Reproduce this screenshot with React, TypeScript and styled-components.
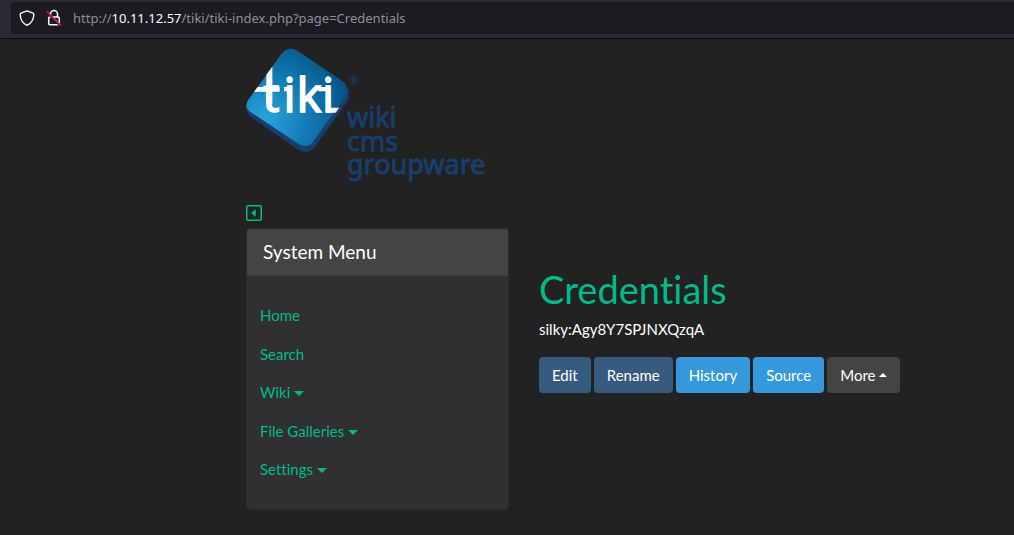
import React from "react";
import styled, { createGlobalStyle } from "styled-components";

const GlobalStyle = createGlobalStyle`
  *, *::before, *::after { box-sizing: border-box; }
  body {
    margin: 0;
    background: #222;
    color: #fff;
    font-family: Lato, "Liberation Sans", sans-serif;
    font-size: 15px;
    line-height: 1.5;
    font-variant-ligatures: none;
  }
`;

const Toolbar = styled.header`
  display: flex;
  height: 39px;
  padding: 2px 0 4px 11px;
  background: #2b2a33;
  border-bottom: 1px solid #0c0c0d;
`;

const AddressField = styled.div`
  display: flex;
  flex: 1;
  align-items: center;
  gap: 11px;
  height: 32px;
  padding: 0 8px;
  border-radius: 4px 0 0 4px;
  background: #1c1b22;
`;

const Address = styled.div`
  font-family: "Noto Sans", sans-serif;
  font-size: 13px;
  line-height: 20px;
  color: #8f8e94;
  white-space: nowrap;
`;

const Host = styled.span`
  color: #fbfbfe;
`;

const Page = styled.div`
  padding: 9px 24px 24px 246px;
`;

const LogoLink = styled.a`
  display: block;
  width: 242px;
  height: 134px;
  svg { display: block; }
`;

const ToggleButton = styled.button`
  display: block;
  margin: 23px 0 7px;
  padding: 0;
  border: 0;
  background: none;
  color: #00bc8c;
  svg { display: block; }
`;

const Columns = styled.div`
  display: grid;
  grid-template-columns: 263px 1fr;
  gap: 30px;
  align-items: start;
`;

const Card = styled.nav`
  border: 1px solid #2b2b2b;
  border-radius: 4px;
  background: #303030;
  overflow: hidden;
`;

const CardTitle = styled.h3`
  margin: 0;
  padding: 12px 16px;
  border-bottom: 1px solid #3a3a3a;
  background: #444;
  font-size: 19px;
  font-weight: 400;
  line-height: 22px;
`;

const Menu = styled.ul`
  margin: 0;
  padding: 20px 13px;
  list-style: none;
`;

const MenuLink = styled.a`
  display: block;
  padding: 8px 0;
  color: #00bc8c;
  text-decoration: none;
`;

const Caret = styled.span<{ $up?: boolean }>`
  display: inline-block;
  margin-left: 4px;
  vertical-align: ${(p) => (p.$up ? "4px" : "2px")};
  border: solid transparent;
  border-width: ${(p) => (p.$up ? "0 4px 4px" : "5px 5px 0")};
  border-${(p) => (p.$up ? "bottom" : "top")}-color: currentColor;
`;

const Main = styled.main`
  padding-top: 38px;
`;

const Title = styled.h1`
  margin: 0 0 6px;
  color: #00bc8c;
  font-size: 38px;
  font-weight: 400;
  line-height: 46px;
`;

const Text = styled.p`
  margin: 0 0 16px;
`;

const Actions = styled.div`
  display: flex;
  flex-wrap: wrap;
  gap: 3px;
`;

const tones = { primary: "#375a7f", info: "#3498db", secondary: "#444" };

const Button = styled.button<{ $tone: keyof typeof tones }>`
  height: 36px;
  padding: 1px 13px 0;
  border: 0;
  border-radius: 4px;
  background: ${(p) => tones[p.$tone]};
  color: #fff;
  font: inherit;
  font-variant-ligatures: none;
`;

const ShieldIcon = () => (
  <svg width="16" height="16" viewBox="0 0 16 16" fill="none" stroke="#fbfbfe" strokeWidth="1.4" strokeLinejoin="round" aria-hidden="true">
    <path d="M8 .8 14 3.1c.5.2.8.6.8 1.1C14.700 9.500 12.500 13.300 8 15.300 3.500 13.300 1.300 9.500 1.200 4.200c0-.5.3-.9.8-1.100z" />
  </svg>
);

const InsecureIcon = () => (
  <svg width="16" height="18" viewBox="0 0 16 18" fill="none" aria-hidden="true">
    <path d="M4.500 8V5a3.500 3.500 0 0 1 7 0v3" stroke="#fbfbfe" strokeWidth="1.500" />
    <rect x="2.700" y="8" width="10.600" height="7.800" rx="1.200" stroke="#fbfbfe" strokeWidth="1.500" />
    <path d="M1.500 4 13.500 16" stroke="#1c1b22" strokeWidth="2" />
    <path d="M1.500 3 14.500 16" stroke="#f0204c" strokeWidth="1.600" strokeLinecap="round" />
  </svg>
);

const CollapseIcon = () => (
  <svg width="16" height="16" viewBox="0 0 16 16" aria-hidden="true">
    <rect x="0.750" y="0.750" width="14.500" height="14.500" rx="1.200" fill="none" stroke="currentColor" strokeWidth="1.500" />
    <path d="M9.700 4.200v7.600L5 8z" fill="currentColor" />
  </svg>
);

const TikiLogo = () => (
  <svg width="242" height="134" viewBox="6 8 242 134" role="img" aria-label="Tiki Wiki CMS Groupware">
    <defs>
      <radialGradient id="face" gradientUnits="userSpaceOnUse" cx="75" cy="235" r="270">
        <stop offset="0" stopColor="#29a4dc" />
        <stop offset="0.500" stopColor="#1279b2" />
        <stop offset="1" stopColor="#02507f" />
      </radialGradient>
      <clipPath id="faceClip">
        <path d="M124 42Q144 16 172 32L310 124Q336 144 320 172L223 308Q206 332 176 316L30 217Q10 202 26 178Z" />
      </clipPath>
    </defs>
    <g transform="scale(0.333333)">
      <path d="M20 196Q16 216 32 230L172 328Q204 346 224 322L322 184Q330 166 325 146L190 250Z" fill="#173f6e" />
      <path d="M124 42Q144 16 172 32L308 124Q332 144 316 170L220 304Q204 327 176 312L30 215Q10 200 26 178Z" fill="url(#face)" />
      <g clipPath="url(#faceClip)" fill="#fff">
        <path d="M0 141H119V155H0Z" />
        <path d="M79 80H97V190H79Z" />
        <path d="M132 141H148V154H132Z" />
        <path d="M228 141H262V154H236Z" />
        <path d="M260 203H340V218H260Z" />
      </g>
    </g>
    <g fill="#fff" fontFamily="'Noto Sans', sans-serif" fontSize="47" stroke="#fff" strokeWidth="1.400">
      <text x="22.500 43.500 56.500 82" y="72">tiki</text>
    </g>
    <g fill="#173f6e" stroke="#173f6e" strokeWidth="0.800" fontFamily="'Noto Sans', sans-serif" fontSize="27">
      <text x="107" y="87">wiki</text>
      <text x="107" y="111">cms</text>
      <text x="107" y="134">groupware</text>
    </g>
    <text x="109" y="45" fill="#173f6e" fontFamily="'Noto Sans', sans-serif" fontSize="12">®</text>
  </svg>
);

const menu = [
  { label: "Home" },
  { label: "Search" },
  { label: "Wiki", children: true },
  { label: "File Galleries", children: true },
  { label: "Settings", children: true },
];

const actions: { label: string; tone: keyof typeof tones; up?: boolean }[] = [
  { label: "Edit", tone: "primary" },
  { label: "Rename", tone: "primary" },
  { label: "History", tone: "info" },
  { label: "Source", tone: "info" },
  { label: "More", tone: "secondary", up: true },
];

export default function App() {
  return (
    <>
      <GlobalStyle />
      <Toolbar>
        <AddressField>
          <ShieldIcon />
          <InsecureIcon />
          <Address>
            http://<Host>10.11.12.57</Host>/tiki/tiki-index.php?page=Credentials
          </Address>
        </AddressField>
      </Toolbar>
      <Page>
        <LogoLink href="#">
          <TikiLogo />
        </LogoLink>
        <ToggleButton aria-label="Toggle left column">
          <CollapseIcon />
        </ToggleButton>
        <Columns>
          <Card>
            <CardTitle>System Menu</CardTitle>
            <Menu>
              {menu.map((item) => (
                <li key={item.label}>
                  <MenuLink href="#">
                    {item.label}
                    {item.children && <Caret />}
                  </MenuLink>
                </li>
              ))}
            </Menu>
          </Card>
          <Main>
            <Title>Credentials</Title>
            <Text>silky:Agy8Y7SPJNXQzqA</Text>
            <Actions>
              {actions.map((action) => (
                <Button key={action.label} $tone={action.tone}>
                  {action.label}
                  {action.up && <Caret $up />}
                </Button>
              ))}
            </Actions>
          </Main>
        </Columns>
      </Page>
    </>
  );
}
